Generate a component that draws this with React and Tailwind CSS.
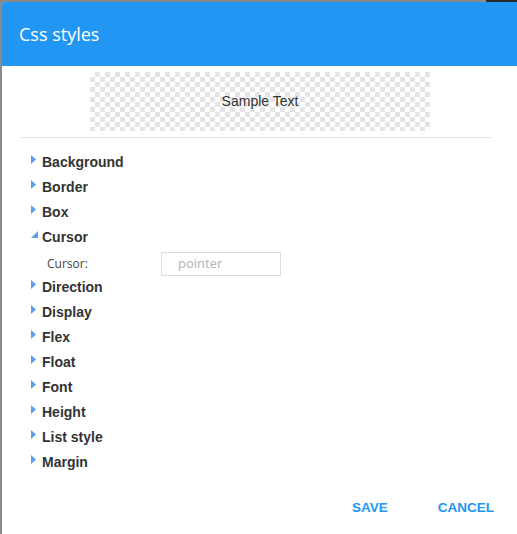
import React from 'react';

const groups = [
  'Background',
  'Border',
  'Box',
  'Cursor',
  'Direction',
  'Display',
  'Flex',
  'Float',
  'Font',
  'Height',
  'List style',
  'Margin',
];

const Caret = ({ open }) =>
  open ? (
    <svg width="8" height="8" viewBox="0 0 8 8" className="mt-[-6px]">
      <polygon points="7,0 7,7 0,7" fill="#5d9df0" />
    </svg>
  ) : (
    <svg width="6" height="10" viewBox="0 0 6 10" className="mt-[-5px]">
      <polygon points="0,0 5,4.5 0,9" fill="#5d9df0" />
    </svg>
  );

export default function App() {
  return (
    <div className="w-[517px] h-[534px] overflow-hidden pl-[2px] pt-[2px] bg-[linear-gradient(to_right,#8a8a8a_486px,#2a2a2a_486px)]">
      <div className="w-[520px] h-[540px] bg-white rounded-tl-[3px] overflow-hidden flex flex-col font-['Liberation_Sans',Arial,sans-serif]">
        {/* header */}
        <div className="h-[64px] shrink-0 bg-[#2196f3] flex items-center pl-[17px]">
          <span className="text-white text-[18px] font-['Open_Sans',sans-serif]">Css styles</span>
        </div>

        {/* preview */}
        <div className="pt-[6px] pl-[88px]">
          <div className="w-[340px] h-[59px] flex items-center justify-center text-[14px] text-[#333] bg-[conic-gradient(#e4e4e4_25%,#ffffff_0_50%,#e4e4e4_0_75%,#ffffff_0)] bg-[length:10px_10px]">
            Sample Text
          </div>
        </div>

        <div className="mt-[6px] ml-[18px] w-[472px] h-px bg-[#e2e2e2]" />

        {/* property groups */}
        <div className="pt-[12px] pl-[29px]">
          {groups.map((g) => (
            <React.Fragment key={g}>
              <div className="h-[25px] flex items-center">
                <div className="w-[11px] flex">
                  <Caret open={g === 'Cursor'} />
                </div>
                <span className="text-[14px] font-bold text-[#333]">{g}</span>
              </div>
              {g === 'Cursor' && (
                <div className="h-[25px] pt-[2px] flex items-start pl-[16px]">
                  <span className="w-[114px] leading-[24px] text-[12px] text-[#444] font-['Open_Sans',sans-serif]">
                    Cursor:
                  </span>
                  <div className="w-[120px] h-[24px] border border-[#dcdcdc] pl-[16px] flex items-center text-[13px] text-[#b3b3b3] font-['Open_Sans',sans-serif]">
                    pointer
                  </div>
                </div>
              )}
            </React.Fragment>
          ))}
        </div>

        {/* footer */}
        <div className="mt-[15px] h-[36px] w-[515px] flex items-center justify-end pr-[15px] gap-[34px]">
          <button className="px-[8px] h-[36px] text-[13.5px] font-bold text-[#2196f3]">SAVE</button>
          <button className="px-[8px] h-[36px] text-[13.5px] font-bold text-[#2196f3]">CANCEL</button>
        </div>
      </div>
    </div>
  );
}
